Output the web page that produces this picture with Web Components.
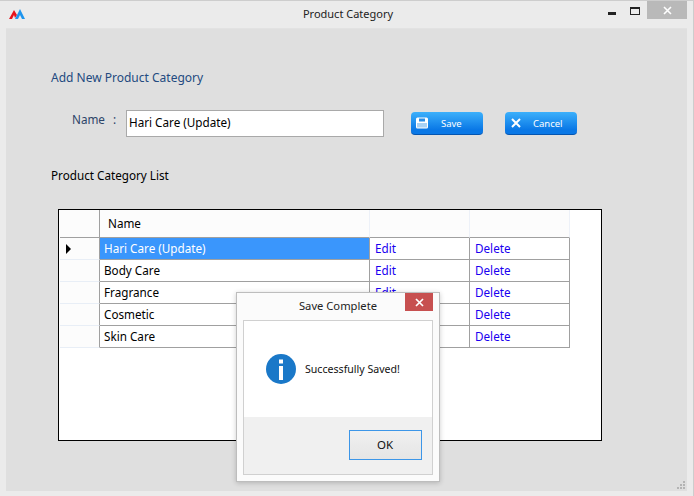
<!DOCTYPE html>
<html>
<head>
<meta charset="utf-8">
<title>Product Category</title>
<style>
  html, body { margin: 0; padding: 0; }
  body { width: 694px; height: 496px; overflow: hidden; font: 11.7px "Noto Sans", sans-serif; }
</style>
</head>
<body>
<app-window>
  <title-bar slot="title">Product Category</title-bar>
  <category-form></category-form>
  <h-label>Product Category List</h-label>
  <category-grid></category-grid>
  <message-box slot="overlay" title="Save Complete">Successfully Saved!</message-box>
</app-window>

<script>
class AppWindow extends HTMLElement {
    constructor() {
        super();
        this.attachShadow({ mode: 'open' });
        this.shadowRoot.innerHTML = `
<style>
  :host {
    display: flex;
    flex-direction: column;
    position: relative;
    box-sizing: border-box;
    width: 694px;
    height: 496px;
    background: #ebebeb;
    border-top: 1px solid #cdcdcd;
    border-right: 1px solid #cdcdcd;
  }
  .panel {
    flex: 1;
    margin: 0 6px 5px 6px;
    padding: 42px 0 0 45px;
    background: #dfdfdf;
    border-top: 1px solid #e2e2e2;
  }
  .grip {
    position: absolute;
    right: 8px;
    bottom: 7px;
  }
</style>
<slot name="title"></slot>
<div class="panel"><slot></slot></div>
<svg class="grip" width="8" height="8" viewBox="0 0 8 8" fill="#b4b4b4">
  <rect x="6" y="0" width="2" height="2"/><rect x="3" y="3" width="2" height="2"/><rect x="6" y="3" width="2" height="2"/>
  <rect x="0" y="6" width="2" height="2"/><rect x="3" y="6" width="2" height="2"/><rect x="6" y="6" width="2" height="2"/>
</svg>
<slot name="overlay"></slot>`;
    }
}

class TitleBar extends HTMLElement {
    constructor() {
        super();
        this.attachShadow({ mode: 'open' });
        this.shadowRoot.innerHTML = `
<style>
  :host {
    display: grid;
    grid-template-columns: 1fr auto 1fr;
    align-items: start;
    height: 27px;
    padding: 0 6px 0 9px;
    font-size: 11px;
    color: #222;
  }
  .logo { margin-top: 7px; display: block; }
  .text { margin-top: 6px; line-height: 14px; }
  .controls { display: flex; justify-content: flex-end; align-items: flex-start; }
  .min { width: 8px; height: 3px; background: #222; margin: 11px 14px 0 0; }
  .max { box-sizing: border-box; width: 10px; height: 8px; border: 1px solid #222; border-top-width: 2px; margin: 6px 7px 0 0; }
  .close { width: 40px; height: 18px; background: #b9b9b9; display: flex; align-items: center; justify-content: center; }
</style>
<svg class="logo" width="17" height="12" viewBox="0 0 17 12">
  <path d="M0 11 L5 2 L8 7 L6 10 L5 7 L3 11 Z" fill="#e8141c"/>
  <path d="M6 11 L10 3 L11 1 L16 11 L13 11 L11 7 L9 11 Z" fill="#1e95ee"/>
</svg>
<div class="text"><slot></slot></div>
<div class="controls">
  <div class="min"></div>
  <div class="max"></div>
  <div class="close">
    <svg width="9" height="9" viewBox="0 0 9 9"><path d="M1 1 L8 8 M8 1 L1 8" stroke="#fff" stroke-width="1.6"/></svg>
  </div>
</div>`;
    }
}

class HLabel extends HTMLElement {
    constructor() {
        super();
        this.attachShadow({ mode: 'open' });
        this.shadowRoot.innerHTML = `
<style>
  :host { display: block; line-height: 14px; color: #000; font-size: 11.7px; }
</style>
<slot></slot>`;
    }
}

class FormButton extends HTMLElement {
    constructor() {
        super();
        this.attachShadow({ mode: 'open' });
        const isSave = this.getAttribute('icon') === 'save';
        const icon = isSave
            ? `<svg width="12" height="12" viewBox="0 0 12 12">
                 <path d="M0 2 Q0 .5 1.500 .5 H10.500 Q12 .5 12 2 V10 Q12 11.500 10.500 11.500 H1.500 Q0 11.500 0 10 Z" fill="#fff"/>
                 <rect x="3" y="1.500" width="6" height="3" fill="#2a8ee6"/>
                 <rect x="1" y="6" width="10" height="4.500" fill="#a9d2f4"/>
               </svg>`
            : `<svg width="12" height="12" viewBox="0 0 12 12"><path d="M2 2 L10 10 M10 2 L2 10" stroke="#fff" stroke-width="2"/></svg>`;
        this.shadowRoot.innerHTML = `
<style>
  :host {
    display: block;
    box-sizing: border-box;
    width: 72px;
    height: 23px;
    border-radius: 4px;
    background: linear-gradient(#3cb0fb, #0a78e6 80%);
    border-bottom: 1px solid #0455b0;
    color: #fff;
    font-size: 9.5px;
  }
  .row { display: grid; grid-template-columns: 27px 1fr; align-items: center; height: 100%; }
  .icon { display: flex; padding-left: 5px; }
  .text { padding: 0 0 0 ${isSave ? 3 : 1}px; }
</style>
<div class="row"><span class="icon">${icon}</span><span class="text"><slot></slot></span></div>`;
    }
}

class CategoryForm extends HTMLElement {
    constructor() {
        super();
        this.attachShadow({ mode: 'open' });
        this.shadowRoot.innerHTML = `
<style>
  :host { display: block; height: 97px; }
  .heading { line-height: 14px; color: #234a80; font-size: 12px; }
  .row { display: flex; align-items: flex-start; margin-top: 25px; }
  .label { width: 54px; margin-left: 21px; line-height: 14px; margin-top: 2px; color: #2c4468; }
  .label span { margin-left: 5px; }
  .input {
    box-sizing: border-box;
    width: 258px;
    height: 27px;
    line-height: 23px;
    padding-left: 2px;
    background: #fff;
    border: 1px solid #a9a9a9;
    color: #000;
  }
  .buttons { display: flex; gap: 22px; margin: 2px 0 0 27px; }
</style>
<div class="heading">Add New Product Category</div>
<div class="row">
  <div class="label">Name <span>:</span></div>
  <div class="input">Hari Care (Update)</div>
  <div class="buttons">
    <form-button icon="save">Save</form-button>
    <form-button icon="cancel">Cancel</form-button>
  </div>
</div>`;
    }
}

class CategoryGrid extends HTMLElement {
    constructor() {
        super();
        this.attachShadow({ mode: 'open' });
        const names = ['Hari Care (Update)', 'Body Care', 'Fragrance', 'Cosmetic', 'Skin Care'];
        const rows = names.map((name, i) => `
  <div class="head ${i === 0 ? 'current' : ''}"></div>
  <div class="cell name ${i === 0 ? 'selected' : ''}">${name}</div>
  <div class="cell link">Edit</div>
  <div class="cell link">Delete</div>`).join('');
        this.shadowRoot.innerHTML = `
<style>
  :host {
    display: block;
    box-sizing: border-box;
    width: 544px;
    height: 232px;
    margin: 27px 0 0 7px;
    background: #fff;
    border: 1px solid #000;
    padding-left: 1px;
    font-size: 11.7px;
  }
  .grid {
    display: grid;
    grid-template-columns: 40px 270px 100px 100px;
    grid-template-rows: 28px repeat(5, 22px);
  }
  .corner, .colhead {
    box-sizing: border-box;
    background: #fcfcfc;
    border-right: 1px solid #edf1f8;
    border-bottom: 1px solid #a0a0a0;
    line-height: 26px;
    color: #000;
  }
  .corner { border-right-color: #a0a0a0; }
  .colhead.first { padding-left: 8px; }
  .head {
    box-sizing: border-box;
    background: #fcfcfc;
    border-right: 1px solid #a0a0a0;
    border-bottom: 1px solid #e8eef6;
    position: relative;
  }
  .head.current::after {
    content: '';
    position: absolute;
    left: 6px;
    top: 6px;
    border-left: 5px solid #000;
    border-top: 5px solid transparent;
    border-bottom: 5px solid transparent;
  }
  .cell {
    box-sizing: border-box;
    padding-left: 4px;
    line-height: 20px;
    border-right: 1px solid #a0a0a0;
    border-bottom: 1px solid #a0a0a0;
    color: #000;
  }
  .selected { background: #3a96fc; color: #fff; }
  .link { color: #1a00f0; padding-left: 5px; }
</style>
<div class="grid">
  <div class="corner"></div>
  <div class="colhead first">Name</div>
  <div class="colhead"></div>
  <div class="colhead"></div>
  ${rows}
</div>`;
    }
}

class MessageBox extends HTMLElement {
    constructor() {
        super();
        this.attachShadow({ mode: 'open' });
        this.shadowRoot.innerHTML = `
<style>
  :host {
    display: flex;
    flex-direction: column;
    position: absolute;
    left: 236px;
    top: 291px;
    box-sizing: border-box;
    width: 204px;
    height: 190px;
    padding: 0 6px 6px 6px;
    background: #fbfbfb;
    border: 1px solid #bdbdbd;
    box-shadow: 0 1px 5px rgba(0, 0, 0, .2);
    color: #111;
    font-size: 10.6px;
  }
  .title { position: relative; height: 27px; flex: none; text-align: center; line-height: 26px; font-size: 11.2px; color: #222; }
  .close {
    position: absolute;
    right: 0;
    top: 0;
    width: 28px;
    height: 18px;
    background: #c75050;
    display: flex;
    align-items: center;
    justify-content: center;
  }
  .box { flex: 1; display: flex; flex-direction: column; border: 1px solid #d0d0d0; }
  .body { flex: 1; display: flex; align-items: center; gap: 9px; background: #fff; padding-left: 22px; box-sizing: border-box; }
  .foot { height: 57px; flex: none; background: #f0f0f0; display: flex; justify-content: flex-end; align-items: flex-start; padding: 13px 10px 0 0; box-sizing: border-box; }
  .ok {
    box-sizing: border-box;
    width: 73px;
    height: 30px;
    border: 1px solid #3c96e8;
    background: linear-gradient(#f0f0f0, #e5e5e5);
    text-align: center;
    line-height: 27px;
    padding-right: 1px;
    font-size: 11.5px;
  }
</style>
<div class="title">${this.getAttribute('title')}
  <div class="close"><svg width="9" height="9" viewBox="0 0 9 9"><path d="M1 1 L8 8 M8 1 L1 8" stroke="#fff" stroke-width="1.7"/></svg></div>
</div>
<div class="box">
  <div class="body">
    <svg width="30" height="30" viewBox="0 0 30 30">
      <circle cx="15" cy="15" r="15" fill="#1a78c8"/>
      <rect x="13" y="5.500" width="4" height="4" fill="#fff"/>
      <rect x="13" y="12" width="4" height="14" fill="#fff"/>
    </svg>
    <span><slot></slot></span>
  </div>
  <div class="foot"><div class="ok">OK</div></div>
</div>`;
    }
}

customElements.define('app-window', AppWindow);
customElements.define('title-bar', TitleBar);
customElements.define('h-label', HLabel);
customElements.define('form-button', FormButton);
customElements.define('category-form', CategoryForm);
customElements.define('category-grid', CategoryGrid);
customElements.define('message-box', MessageBox);
</script>
</body>
</html>
